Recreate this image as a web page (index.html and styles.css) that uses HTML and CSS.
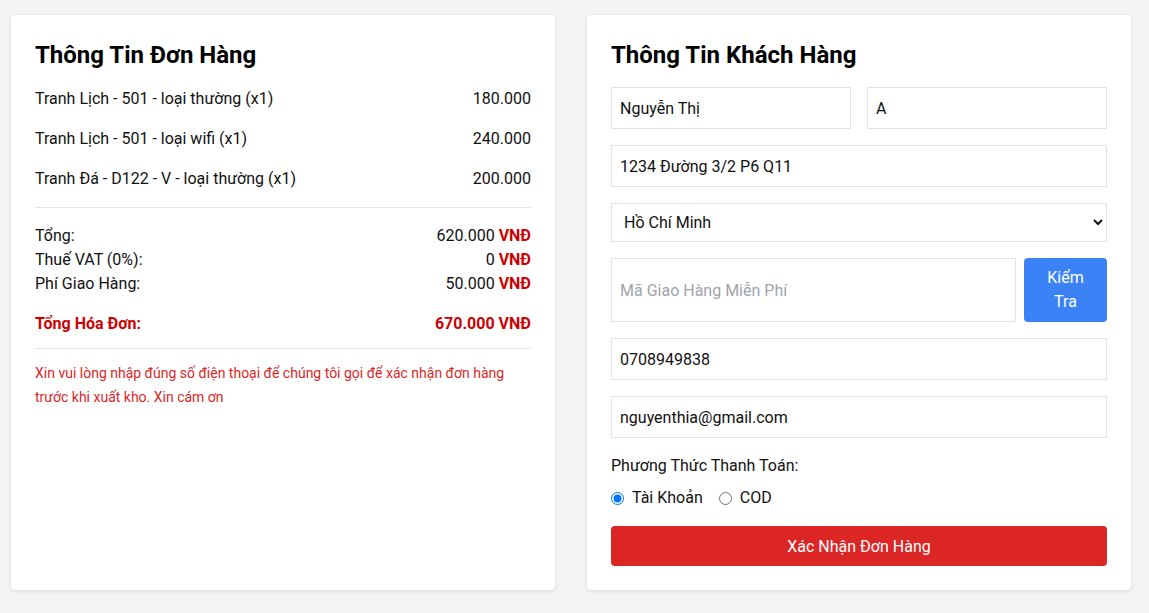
FILE: index.html
```html
<!DOCTYPE html>
<html lang="vi">
<head>
<meta charset="utf-8">
<link rel="stylesheet" href="styles.css">
</head>
<body>
<div class="page">
  <section class="card">
    <h2 class="card-title">Thông Tin Đơn Hàng</h2>
    <div class="items">
      <div class="row"><span>Tranh Lịch - 501 - loại thường (x1)</span><span>180.000</span></div>
      <div class="row"><span>Tranh Lịch - 501 - loại wifi (x1)</span><span>240.000</span></div>
      <div class="row"><span>Tranh Đá - D122 - V - loại thường (x1)</span><span>200.000</span></div>
    </div>
    <div class="totals">
      <div class="row"><span>Tổng:</span><span>620.000 <b class="cur">VNĐ</b></span></div>
      <div class="row"><span>Thuế VAT (0%):</span><span>0 <b class="cur">VNĐ</b></span></div>
      <div class="row"><span>Phí Giao Hàng:</span><span>50.000 <b class="cur">VNĐ</b></span></div>
      <div class="row grand"><span>Tổng Hóa Đơn:</span><span>670.000 VNĐ</span></div>
    </div>
    <p class="note">Xin vui lòng nhập đúng số điện thoại để chúng tôi gọi để xác nhận đơn hàng trước khi xuất kho. Xin cám ơn</p>
  </section>

  <section class="card">
    <h2 class="card-title">Thông Tin Khách Hàng</h2>
    <form class="form">
      <div class="two">
        <input class="field" type="text" value="Nguyễn Thị">
        <input class="field" type="text" value="A">
      </div>
      <input class="field" type="text" value="1234 Đường 3/2 P6 Q11">
      <select class="field select">
        <option>Hồ Chí Minh</option>
      </select>
      <div class="code-row">
        <input class="field code" type="text" placeholder="Mã Giao Hàng Miễn Phí">
        <button type="button" class="btn-check">Kiểm Tra</button>
      </div>
      <input class="field" type="text" value="0708949838">
      <input class="field" type="text" value="nguyenthia@gmail.com">
      <div class="pay">
        <div class="pay-label">Phương Thức Thanh Toán:</div>
        <div class="radios">
          <label class="radio"><input type="radio" name="pay" checked> Tài Khoản</label>
          <label class="radio"><input type="radio" name="pay"> COD</label>
        </div>
      </div>
      <button type="button" class="btn-submit">Xác Nhận Đơn Hàng</button>
    </form>
  </section>
</div>
</body>
</html>
```

FILE: styles.css
```css
* { box-sizing: border-box; }
html, body { margin: 0; padding: 0; }
body {
  background: #f4f4f4;
  font-family: Roboto, "Noto Sans", Arial, sans-serif;
  color: #111;
  font-size: 16px;
  line-height: 24px;
}
.page {
  display: grid;
  grid-template-columns: 544px 544px;
  gap: 32px;
  padding: 15px 18px 23px 11px;
}
.card {
  background: #fff;
  border-radius: 4px;
  box-shadow: 0 1px 4px rgba(0,0,0,0.12);
  padding: 24px;
}
.card-title {
  margin: 0 0 16px;
  font-size: 24px;
  line-height: 32px;
  font-weight: 700;
  color: #000;
}
.row {
  display: flex;
  justify-content: space-between;
}
.items {
  display: flex;
  flex-direction: column;
  gap: 16px;
  padding-bottom: 16px;
  border-bottom: 1px solid #e5e5e5;
}
.totals {
  padding: 16px 0 12px;
  border-bottom: 1px solid #e5e5e5;
}
.cur { color: #cc0000; font-weight: 700; }
.grand {
  margin-top: 16px;
  color: #cc0000;
  font-weight: 700;
}
.note {
  margin: 12px 0 0;
  font-size: 14px;
  line-height: 24px;
  color: #dc2626;
}
.form {
  display: flex;
  flex-direction: column;
  gap: 16px;
}
.two {
  display: grid;
  grid-template-columns: 1fr 1fr;
  gap: 16px;
}
.field {
  display: block;
  width: 100%;
  height: 42px;
  border: 1px solid #e3e3e3;
  border-radius: 0;
  padding: 0 8px;
  font-family: Roboto, "Noto Sans", Arial, sans-serif;
  font-size: 16px;
  color: #111;
  background: #fff;
  outline: none;
}
.field::placeholder { color: #a0a4ab; }
.select {
  height: 39px;
  padding: 0 8px;
}
.code-row {
  display: flex;
  gap: 8px;
}
.code { flex: 1; height: 64px; }
.btn-check {
  width: 83px;
  height: 64px;
  border: 0;
  border-radius: 4px;
  background: #3b82f6;
  color: #fff;
  font-family: Roboto, "Noto Sans", Arial, sans-serif;
  font-size: 16px;
  line-height: 24px;
  padding: 8px 16px;
}
.pay-label { line-height: 24px; }
.radios {
  display: flex;
  gap: 16px;
  margin-top: 8px;
}
.radio {
  display: flex;
  align-items: center;
  gap: 4px;
  line-height: 24px;
}
.radio input { margin: 0 4px 0 0; width: 13px; height: 13px; }
.btn-submit {
  height: 40px;
  border: 0;
  border-radius: 4px;
  background: #dc2626;
  color: #fff;
  font-family: Roboto, "Noto Sans", Arial, sans-serif;
  font-size: 16px;
}
```
